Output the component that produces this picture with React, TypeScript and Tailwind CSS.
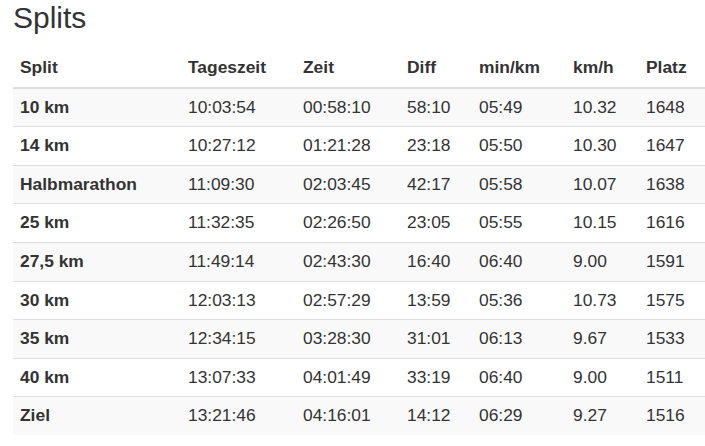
import React from "react";

const rows = [
  ["10 km", "10:03:54", "00:58:10", "58:10", "05:49", "10.32", "1648"],
  ["14 km", "10:27:12", "01:21:28", "23:18", "05:50", "10.30", "1647"],
  ["Halbmarathon", "11:09:30", "02:03:45", "42:17", "05:58", "10.07", "1638"],
  ["25 km", "11:32:35", "02:26:50", "23:05", "05:55", "10.15", "1616"],
  ["27,5 km", "11:49:14", "02:43:30", "16:40", "06:40", "9.00", "1591"],
  ["30 km", "12:03:13", "02:57:29", "13:59", "05:36", "10.73", "1575"],
  ["35 km", "12:34:15", "03:28:30", "31:01", "06:13", "9.67", "1533"],
  ["40 km", "13:07:33", "04:01:49", "33:19", "06:40", "9.00", "1511"],
  ["Ziel", "13:21:46", "04:16:01", "14:12", "06:29", "9.27", "1516"],
];

const headers = ["Split", "Tageszeit", "Zeit", "Diff", "min/km", "km/h", "Platz"];

const grid = "grid grid-cols-[168px_115px_104px_72px_94px_73px_1fr]";

export default function App() {
  return (
    <div
      className="w-[705px] h-[446px] overflow-hidden bg-white text-[#333] pl-[13px]"
      style={{ fontFamily: '"Liberation Sans", Arial, sans-serif' }}
    >
      <h2 className="mt-[1px] text-[30px] leading-[33px] font-normal">Splits</h2>
      <div className="mt-[15px] w-[720px] text-[17.4px] leading-[21.6px]">
        <div className={`${grid} border-b-2 border-[#ddd]`}>
          {headers.map((h) => (
            <div key={h} className="px-[7px] py-2 font-bold whitespace-nowrap">
              {h}
            </div>
          ))}
        </div>
        {rows.map((r, i) => (
          <div
            key={r[0]}
            className={`${grid} ${i > 0 ? "border-t border-[#ddd]" : ""} ${
              i % 2 === 0 ? "bg-[#f9f9f9]" : "bg-white"
            }`}
          >
            {r.map((c, j) => (
              <div
                key={j}
                className={`px-[7px] py-2 whitespace-nowrap ${j === 0 ? "font-bold" : ""}`}
              >
                {c}
              </div>
            ))}
          </div>
        ))}
      </div>
    </div>
  );
}
